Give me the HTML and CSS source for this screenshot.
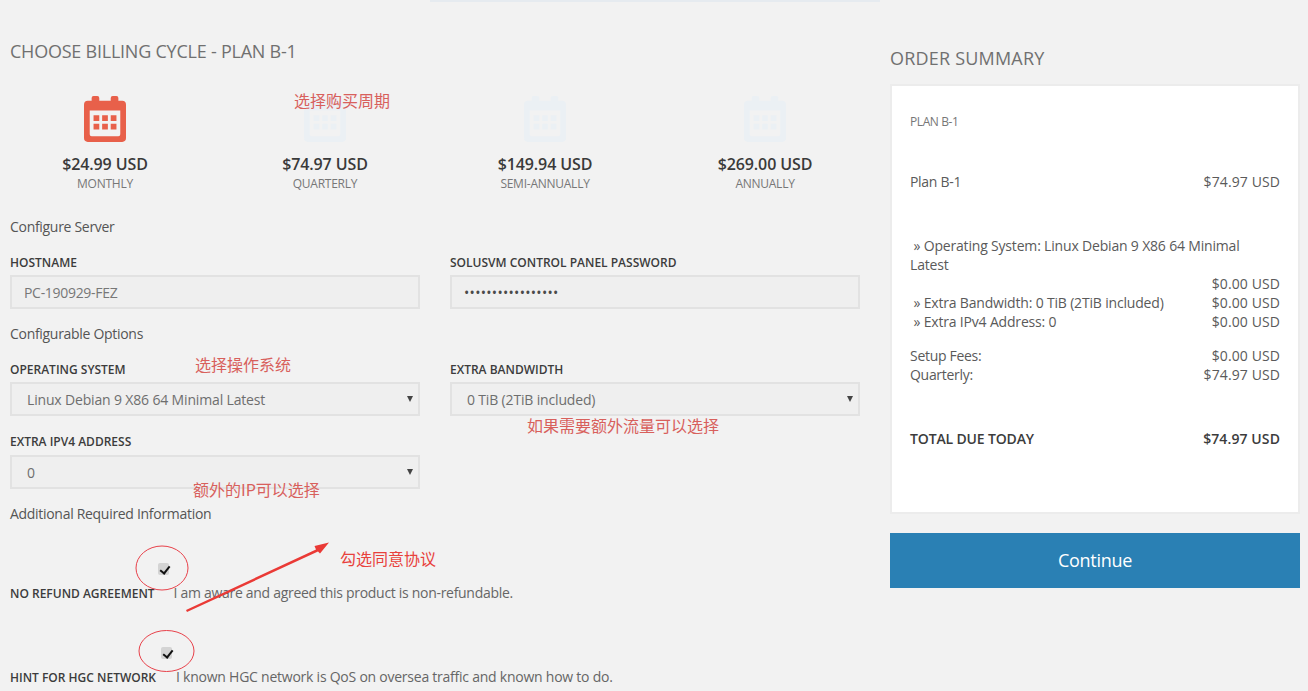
FILE: index.html
```html
<!DOCTYPE html>
<html lang="en">
<head>
<meta charset="utf-8">
<title>Choose billing cycle</title>
<link rel="stylesheet" href="styles.css">
</head>
<body>
<svg class="defs" width="0" height="0" aria-hidden="true">
  <symbol id="cal" viewBox="0 0 44 48">
    <path fill-rule="evenodd" d="M10 0h4a2 2 0 0 1 2 2v3h12V2a2 2 0 0 1 2-2h4a2 2 0 0 1 2 2v3h4a4 4 0 0 1 4 4v35a4 4 0 0 1-4 4H4a4 4 0 0 1-4-4V9a4 4 0 0 1 4-4h4V2a2 2 0 0 1 2-2zM6 15v25a2 2 0 0 0 2 2h28a2 2 0 0 0 2-2V15zM10 20h6v6h-6zM19 20h6v6h-6zM28 20h6v6h-6zM10 29h6v6h-6zM19 29h6v6h-6zM28 29h6v6h-6z"/>
  </symbol>
</svg>
<div class="topline"></div>
<div class="page">
  <main class="left">
    <h2 class="title">CHOOSE BILLING CYCLE - PLAN B-1</h2>
    <div class="cycles">
      <div class="cycle active"><svg class="cal"><use href="#cal"/></svg><div class="price">$24.99 USD</div><div class="term">MONTHLY</div></div>
      <div class="cycle"><svg class="cal"><use href="#cal"/></svg><div class="price">$74.97 USD</div><div class="term">QUARTERLY</div></div>
      <div class="cycle"><svg class="cal"><use href="#cal"/></svg><div class="price">$149.94 USD</div><div class="term">SEMI-ANNUALLY</div></div>
      <div class="cycle"><svg class="cal"><use href="#cal"/></svg><div class="price">$269.00 USD</div><div class="term">ANNUALLY</div></div>
    </div>
    <h3 class="section s1">Configure Server</h3>
    <div class="fields">
      <div class="field"><div class="label">HOSTNAME</div><div class="control">PC-190929-FEZ</div></div>
      <div class="field"><div class="label">SOLUSVM CONTROL PANEL PASSWORD</div><div class="control pw">•••••••••••••••••</div></div>
    </div>
    <h3 class="section s2">Configurable Options</h3>
    <div class="fields">
      <div class="field"><div class="label">OPERATING SYSTEM</div><div class="control sel">Linux Debian 9 X86 64 Minimal Latest<span class="caret"></span></div></div>
      <div class="field"><div class="label">EXTRA BANDWIDTH</div><div class="control sel">0 TiB (2TiB included)<span class="caret"></span></div></div>
      <div class="field f3"><div class="label">EXTRA IPV4 ADDRESS</div><div class="control sel">0<span class="caret"></span></div></div>
    </div>
    <h3 class="section s3">Additional Required Information</h3>
    <div class="agree a1">
      <div class="checkline c1"><span class="check"></span></div>
      <div class="agree-row"><b class="agree-label">NO REFUND AGREEMENT</b><span class="agree-text t1">I am aware and agreed this product is non-refundable.</span></div>
    </div>
    <div class="agree a2">
      <div class="checkline c2"><span class="check"></span></div>
      <div class="agree-row"><b class="agree-label">HINT FOR HGC NETWORK</b><span class="agree-text t2">I known HGC network is QoS on oversea traffic and known how to do.</span></div>
    </div>
  </main>
  <aside class="right">
    <h2 class="title sum-title">ORDER SUMMARY</h2>
    <div class="card">
      <div class="plan">PLAN B-1</div>
      <div class="row main"><span>Plan B-1</span><span class="val">$74.97 USD</span></div>
      <div class="opts">
        <div class="wrap">&nbsp;» Operating System: Linux Debian 9 X86 64 Minimal Latest</div>
        <div class="amt val">$0.00 USD</div>
        <div class="row"><span>&nbsp;» Extra Bandwidth: 0 TiB (2TiB included)</span><span class="val">$0.00 USD</span></div>
        <div class="row"><span>&nbsp;» Extra IPv4 Address: 0</span><span class="val">$0.00 USD</span></div>
      </div>
      <div class="fees">
        <div class="row"><span>Setup Fees:</span><span class="val">$0.00 USD</span></div>
        <div class="row"><span>Quarterly:</span><span class="val">$74.97 USD</span></div>
      </div>
      <div class="row total"><span>TOTAL DUE TODAY</span><span class="val">$74.97 USD</span></div>
    </div>
    <div class="continue">Continue</div>
  </aside>
</div>
<span class="note n1">选择购买周期</span>
<span class="note n2">选择操作系统</span>
<span class="note n3">如果需要额外流量可以选择</span>
<span class="note n4">额外的IP可以选择</span>
<span class="note n5">勾选同意协议</span>
<svg class="marks" width="1308" height="691" viewBox="0 0 1308 691" aria-hidden="true">
  <ellipse cx="162" cy="568" rx="26" ry="22" fill="none" stroke="#e8414a" stroke-width="1"/>
  <ellipse cx="166.500" cy="651" rx="27.500" ry="20.500" fill="none" stroke="#e8414a" stroke-width="1"/>
  <path d="M186 610L316 549.500L314.500 546L329 542.500L320 553.500L318 551.500L187 612Z" fill="#ea3a36"/>
</svg>
</body>
</html>
```
FILE: styles.css
```css
* { box-sizing: border-box; }
html, body { margin: 0; padding: 0; }
body {
  width: 1308px;
  height: 691px;
  overflow: hidden;
  position: relative;
  background: #f2f2f2;
  color: #555;
  font-family: "Open Sans", "Noto Sans", sans-serif;
  font-size: 14px;
  letter-spacing: -0.3px;
}
.defs { position: absolute; }
.topline { height: 2px; width: 450px; margin-left: 430px; background: #e6ebf0; }
.page { display: flex; gap: 30px; padding: 0 8px 0 10px; }
.left { width: 850px; flex: none; }
.right { width: 410px; flex: none; }
.title { margin: 0; font-size: 18px; line-height: 24px; font-weight: 400; color: #707070; letter-spacing: -0.23px; }
.left > .title { padding-top: 37px; }
.sum-title { padding-top: 44px; letter-spacing: 0.2px; }
.cycles { display: grid; grid-template-columns: repeat(4, 220px); margin-left: -15px; margin-top: 32px; }
.cycle { display: flex; flex-direction: column; align-items: center; }
.cal { width: 42px; height: 48px; fill: #ebf0f4; }
.active .cal { fill: #e8604a; }
.price { margin-top: 11px; font-size: 16px; line-height: 20px; font-weight: 600; color: #3a3a3a; letter-spacing: -0.1px; }
.term { font-size: 12px; line-height: 20px; color: #777; letter-spacing: -0.25px; }
.section { margin: 0; font-size: 14px; line-height: 20px; font-weight: 400; color: #555; }
.s1 { margin-top: 23px; }
.s2 { margin-top: 15px; }
.s3 { margin-top: 15px; }
.fields { display: grid; grid-template-columns: 410px 410px; column-gap: 30px; margin-top: 16px; }
.label { font-size: 12px; line-height: 20px; font-weight: 600; color: #3c3c3c; letter-spacing: 0; }
.control {
  position: relative;
  height: 34px;
  margin-top: 2px;
  padding-left: 12px;
  line-height: 32px;
  background: #efefef;
  border: 2px solid #e2e2e2;
  color: #777;
}
.pw { color: #4a4a4a; font-size: 14px; letter-spacing: 0.3px; }
.sel { padding-left: 15px; color: #6e6e6e; letter-spacing: -0.16px; }
.caret {
  position: absolute;
  right: 5px;
  top: 12px;
  border-left: 3px solid transparent;
  border-right: 3px solid transparent;
  border-top: 6px solid #444;
}
.f3 { margin-top: 16px; grid-column: 1; }
.f3 .control { margin-top: 3px; }
.agree-row { display: flex; align-items: baseline; height: 20px; margin-top: 7px; }
.agree-label { font-size: 12px; font-weight: 600; color: #3c3c3c; letter-spacing: 0; }
.agree-text { color: #666; }
.t1 { margin-left: 19px; }
.t2 { margin-left: 20px; letter-spacing: -0.24px; }
.checkline { height: 13px; }
.c1 { margin-top: 39px; padding-left: 148px; }
.c2 { margin-top: 44px; padding-left: 151px; }
.check { display: block; width: 11px; height: 12px; border-radius: 2px; background: #d4d4d4; position: relative; }
.check::after {
  content: "";
  position: absolute;
  left: 3.500px;
  top: 1px;
  width: 4px;
  height: 8px;
  border: solid #111;
  border-width: 0 2px 2px 0;
  transform: rotate(38deg);
}
.card {
  height: 430px;
  margin-top: 14px;
  padding: 0 18px 0 18px;
  background: #fff;
  border: 2px solid #ececec;
  color: #5a5a5a;
}
.val { letter-spacing: 0.1px; }
.plan { margin-top: 27px; font-size: 12px; line-height: 18px; color: #777; letter-spacing: -0.4px; }
.row { display: flex; justify-content: space-between; }
.main { margin-top: 41px; line-height: 20px; }
.opts { margin-top: 44px; line-height: 19px; letter-spacing: -0.18px; }
.wrap { padding-right: 20px; }
.amt { text-align: right; }
.fees { margin-top: 15px; line-height: 19px; }
.total { margin-top: 45px; font-weight: 600; color: #3c3c3c; line-height: 20px; letter-spacing: -0.15px; }
.continue {
  height: 55px;
  margin-top: 19px;
  background: #2a80b4;
  color: #fff;
  font-size: 18px;
  line-height: 55px;
  text-align: center;
}
.note {
  position: absolute;
  font-family: "Noto Sans CJK SC", sans-serif;
  font-size: 16px;
  line-height: 20px;
  letter-spacing: 0;
  color: #d8605c;
  white-space: nowrap;
}
.n1 { left: 294px; top: 90px; }
.n2 { left: 195px; top: 354px; }
.n3 { left: 527px; top: 415px; }
.n4 { left: 193px; top: 479px; }
.n5 { left: 340px; top: 548px; color: #e8413c; }
.marks { position: absolute; left: 0; top: 0; pointer-events: none; }
```
